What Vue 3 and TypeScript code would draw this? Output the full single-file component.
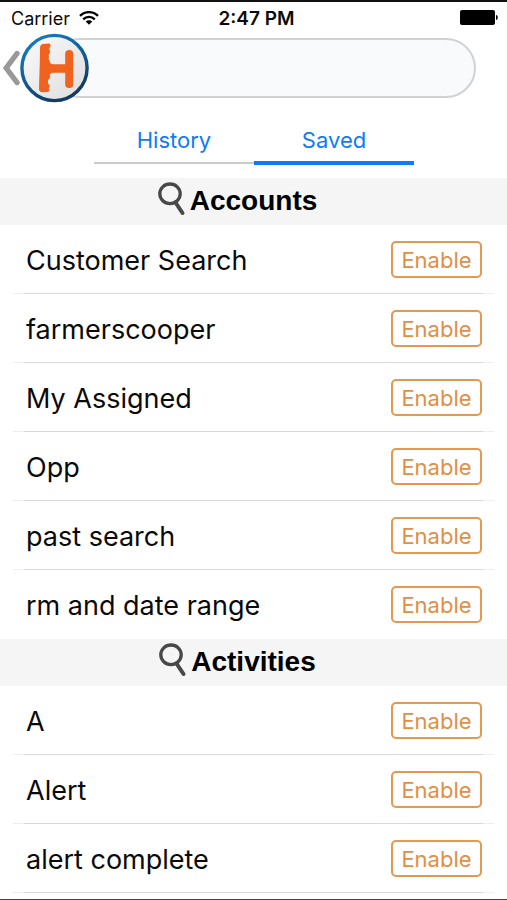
<script setup lang="ts">
interface SavedSearch {
  name: string
}

interface SearchGroup {
  title: string
  items: SavedSearch[]
}

const toItems = (...names: string[]): SavedSearch[] => names.map((name) => ({ name }))

const groups: SearchGroup[] = [
  {
    title: 'Accounts',
    items: toItems('Customer Search', 'farmerscooper', 'My Assigned', 'Opp', 'past search', 'rm and date range'),
  },
  { title: 'Activities', items: toItems('A', 'Alert', 'alert complete') },
]
</script>

<template>
  <div class="screen">
    <div class="status">
      <div class="carrier">
        <span>Carrier</span>
        <svg width="20" height="14" viewBox="0 0 20 14" aria-hidden="true">
          <g fill="none" stroke="#000" stroke-width="2.4">
            <path d="M1 4.9C6 -.1 14 -.1 19 4.9" />
            <path d="M4.2 8.3C7.5 5 12.5 5 15.8 8.3" />
          </g>
          <path d="M6.7 10.5C8.6 8.8 11.4 8.8 13.3 10.5L10 13.8Z" />
        </svg>
      </div>
      <span class="clock">2:47 PM</span>
      <svg class="battery" width="38" height="16" viewBox="0 0 38 16" aria-hidden="true">
        <rect width="35" height="15" rx="2" />
        <path d="M36 5C38.4 5.6 38.4 9.4 36 10Z" />
      </svg>
    </div>

    <header class="topbar">
      <button class="back" type="button" aria-label="Back">
        <svg width="20" height="38" viewBox="0 0 20 38" aria-hidden="true">
          <path d="M17 4.5L6.2 19L17 33.5" fill="none" stroke="#999" stroke-width="5.4" stroke-linecap="round" />
        </svg>
      </button>
      <svg class="logo" width="70" height="70" viewBox="0 0 70 70" aria-hidden="true">
        <defs>
          <linearGradient id="ring" x1="0" y1="0" x2="0.5" y2="1">
            <stop offset="0" stop-color="#1b80c6" />
            <stop offset="0.45" stop-color="#1265a5" />
            <stop offset="1" stop-color="#123c62" />
          </linearGradient>
          <linearGradient id="disc" x1="0" y1="0" x2="1" y2="1">
            <stop offset="0" stop-color="#fafafa" />
            <stop offset="0.5" stop-color="#ececec" />
            <stop offset="1" stop-color="#dcdcdc" />
          </linearGradient>
        </defs>
        <circle cx="34.5" cy="35" r="32.6" fill="url(#disc)" stroke="url(#ring)" stroke-width="3.4" />
        <path
          fill="#f1621f"
          d="M22.5 11L29 10.6Q31.5 11.3 30.3 13.8Q28.8 15 29.6 17Q31 18.5 29.5 20.5Q28 22 29 24Q27.8 26.5 29.6 27.7Q30 30.8 33 31.2H45.2V20.5Q45.2 17 49.2 17Q53.2 17 53.2 20.5V51.5Q53.2 55 49.2 55Q45.2 55 45.2 51.5V39.8H33Q30.5 39.8 29.6 42Q31 44 29.5 45.5Q27.8 46.5 28 48.5Q27.2 50.2 28.8 51.5Q30.8 52.5 29.4 54Q28 55.5 29.5 57.3Q29 59.6 26.5 59L22.5 59.3Q19 59.5 19 55.5L19.3 45L19.8 30L20 14.5Q20.1 11.5 22.5 11Z"
        />
      </svg>
      <input class="search" type="search" aria-label="Search" />
    </header>

    <nav class="tabs">
      <button class="tab" type="button">History</button>
      <button class="tab active" type="button" aria-current="page">Saved</button>
    </nav>

    <section v-for="group in groups" :key="group.title">
      <h2 class="heading">
        <svg width="28" height="34" viewBox="0 0 28 34" aria-hidden="true">
          <ellipse cx="12" cy="11.8" rx="10.2" ry="9.8" fill="none" stroke="#484848" stroke-width="3.3" />
          <path d="M17.5 20.5L24.5 31" stroke="#484848" stroke-width="4" stroke-linecap="round" />
        </svg>
        <span>{{ group.title }}</span>
      </h2>
      <ul class="list">
        <li v-for="item in group.items" :key="item.name" class="row">
          <span>{{ item.name }}</span>
          <button class="enable" type="button" :aria-label="`Enable ${item.name}`">Enable</button>
        </li>
      </ul>
    </section>
  </div>
</template>

<style>
body {
  margin: 0;
  background: #fff;
}
</style>

<style scoped>
.screen {
  padding-bottom: 6px;
  border-top: 2px solid #111;
  border-bottom: 1px solid #444;
  color: #0a0a0a;
  font-family: Inter, "Liberation Sans", sans-serif;
}

button {
  margin: 0;
  font-family: inherit;
  cursor: pointer;
}

.status {
  display: grid;
  grid-template-columns: 1fr auto 1fr;
  align-items: center;
  height: 32px;
  padding: 0 9px 0 11px;
  font-size: 18px;
}

.carrier {
  display: flex;
  align-items: center;
  gap: 9px;
}

.clock {
  padding-left: 4px;
  font-size: 19px;
  font-weight: 600;
}

.battery {
  justify-self: end;
}

.topbar {
  display: flex;
  align-items: center;
  height: 68px;
  padding-right: 31px;
}

.back {
  display: flex;
  padding: 0;
  border: 0;
  background: none;
}

.logo {
  position: relative;
  flex: none;
}

.search {
  box-sizing: border-box;
  flex: 1;
  min-width: 0;
  height: 60px;
  margin-left: -40px;
  padding: 0 30px 0 48px;
  border: 2px solid #d0d2d3;
  border-radius: 30px;
  background: #f8fafc;
  font: inherit;
  font-size: 22px;
  appearance: none;
}

.tabs {
  display: flex;
  align-items: flex-end;
  justify-content: center;
  padding: 16px 93px 12px 94px;
}

.tab {
  flex: 1;
  height: 48px;
  padding: 0 0 4px;
  border: 0;
  background: linear-gradient(#ccc, #ccc) 0 44px / 100% 2px no-repeat;
  color: #0c7cf8;
  font-size: 22px;
  line-height: 44px;
}

.tab.active {
  background: linear-gradient(#0c7cf8, #0c7cf8) 0 43px / 100% 4px no-repeat;
}

.heading {
  display: flex;
  align-items: center;
  justify-content: center;
  gap: 4px;
  height: 47px;
  margin: 0;
  padding-right: 32px;
  background: #f5f5f5;
  color: #000;
  font: bold 28px/45px "Liberation Sans", Arial, sans-serif;
}

.heading svg {
  margin-bottom: 6px;
}

.heading span {
  padding-bottom: 2px;
}

.list {
  margin: 0;
  padding: 0 13px;
  list-style: none;
}

.row {
  display: flex;
  align-items: center;
  justify-content: space-between;
  box-sizing: border-box;
  height: 69px;
  padding: 0 12px 0 13px;
  background: linear-gradient(90deg, #eee 11px, #dadadc 11px calc(100% - 11px), #eee calc(100% - 11px)) 0 100% / 100% 1px no-repeat;
  font-size: 27px;
}

section:not(:last-child) .row:last-child {
  background: none;
}

.row > span {
  padding-top: 2px;
}

.enable {
  box-sizing: border-box;
  width: 91px;
  height: 37px;
  padding: 0;
  border: 2px solid #e5984f;
  border-radius: 5px;
  background: #fff;
  color: #e28e45;
  font-size: 22px;
  line-height: 32px;
}
</style>
